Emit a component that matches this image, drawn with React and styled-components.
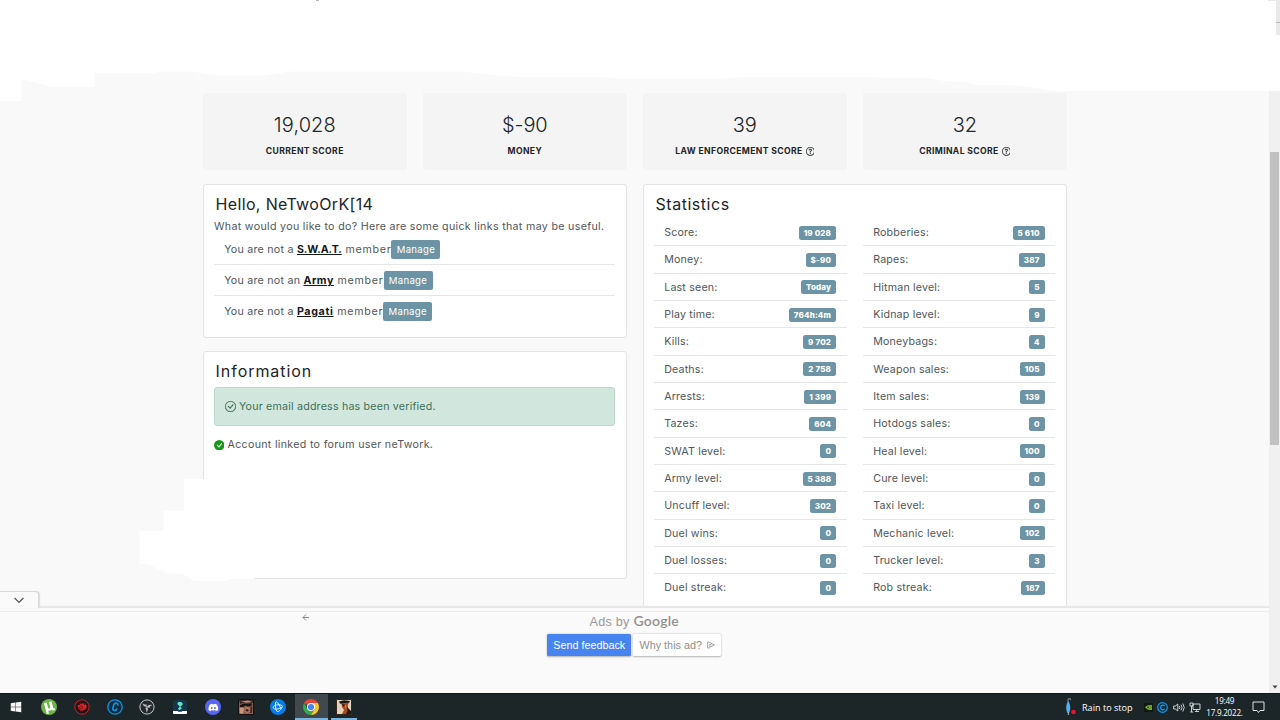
import React from 'react';
import styled, { createGlobalStyle } from 'styled-components';
import { BsQuestionCircle, BsCheckCircle, BsCheckCircleFill } from 'react-icons/bs';
import { FaDiscord, FaWindows } from 'react-icons/fa';

const Global = createGlobalStyle`
  * { box-sizing: border-box; }
  body { margin: 0; background: #f9f9f9; overflow: hidden; }
  h2, p { margin: 0; }
`;

const Screen = styled.div`
  position: relative;
  width: 1280px;
  height: 720px;
  display: flex;
  flex-direction: column;
  overflow: hidden;
  background: #f9f9f9;
  color: #212529;
  font-family: Inter, "Open Sans", sans-serif;
  font-size: 10.67px;
`;

const Browser = styled.div`
  display: flex;
  height: 693px;
`;

const Viewport = styled.div`
  display: flex;
  flex-direction: column;
  width: 1268.5px;
`;

const Page = styled.main`
  height: 607px;
  padding: 93.4px 0 0 202.8px;
  overflow: hidden;
`;

const ScoreRow = styled.section`
  display: grid;
  grid-template-columns: repeat(4, 204px);
  column-gap: 16px;
`;

const ScoreCard = styled.div`
  height: 77px;
  border-radius: 3px;
  background: #f4f4f4;
  display: flex;
  flex-direction: column;
  align-items: center;
  padding-top: 19px;
`;

const ScoreValue = styled.div`
  font-size: 20px;
  line-height: 26px;
  font-weight: 300;
  letter-spacing: ${(p) => p.$track || 0}px;
`;

const ScoreLabel = styled.div`
  display: flex;
  align-items: center;
  gap: 3px;
  margin-top: 6.8px;
  font-size: 8.6px;
  line-height: 12px;
  font-weight: 650;
  letter-spacing: 0.38px;
`;

const Columns = styled.div`
  display: grid;
  grid-template-columns: 424px 424px;
  column-gap: 16px;
  margin-top: 13.6px;
`;

const Stack = styled.div`
  display: flex;
  flex-direction: column;
  gap: 13px;
`;

const Panel = styled.section`
  height: ${(p) => p.$height}px;
  padding: 8px 10.4px 0 10.2px;
  border: 1px solid #e3e3e3;
  border-radius: 3px;
  background: #fff;
  color: #50565b;
`;

const Title = styled.h2`
  padding-left: 1.6px;
  font-size: 16px;
  line-height: 22px;
  font-weight: 400;
  color: #212529;
  letter-spacing: ${(p) => p.$track || 0}px;
`;

const Intro = styled.p`
  margin-top: 4.5px;
  line-height: 16px;
  letter-spacing: 0.32px;
  white-space: nowrap;
`;

const Memberships = styled.div`
  margin-top: -0.7px;
`;

const Membership = styled.div`
  display: flex;
  align-items: center;
  height: 30.7px;
  padding-left: 10.2px;
  border-bottom: ${(p) => (p.$last ? 0 : 1)}px solid #e6e6e6;
  letter-spacing: 0.25px;
  white-space: pre;
`;

const GroupLink = styled.a`
  color: #14181b;
  font-weight: 700;
  text-decoration: underline;
  letter-spacing: ${(p) => p.$track}px;
`;

const Suffix = styled.span`
  letter-spacing: 0.72px;
`;

const Manage = styled.button`
  width: 49px;
  height: 19px;
  padding: 0;
  border: 0;
  border-radius: 2px;
  background: #6c94a4;
  color: #fff;
  font: 9.6px Inter, sans-serif;
  letter-spacing: 0.3px;
`;

const Alert = styled.div`
  display: flex;
  align-items: center;
  gap: 3px;
  height: 39px;
  margin-top: 5px;
  padding-left: 10px;
  border: 1px solid #badbcc;
  border-radius: 3px;
  background: #d1e7dd;
  color: #41705a;
  letter-spacing: 0.2px;
`;

const Linked = styled.div`
  display: flex;
  align-items: center;
  gap: 3px;
  height: 16px;
  margin-top: 10.8px;
  letter-spacing: 0.31px;
  svg { color: #159a15; }
`;

const StatGrid = styled.div`
  display: grid;
  grid-template-columns: 193px 192.5px;
  column-gap: 16px;
  margin-top: 4px;
`;

const Stat = styled.div`
  display: flex;
  align-items: center;
  justify-content: space-between;
  height: 27.34px;
  padding: ${(p) => (p.$last ? 0 : 1)}px 10.9px 0 10.2px;
  border-bottom: ${(p) => (p.$last ? 0 : 1)}px solid #e6e6e6;
  letter-spacing: 0.18px;
`;

const Badge = styled.span`
  height: 14px;
  padding: 0 5px;
  border-radius: 2.5px;
  background: #6c94a4;
  color: #fff;
  font-size: 8px;
  font-weight: 800;
  line-height: 14px;
  letter-spacing: 0.15px;
`;

const AdBar = styled.aside`
  position: relative;
  height: 86px;
  display: flex;
  flex-direction: column;
  align-items: center;
  padding-top: 3px;
  border-top: 1px solid #e6e6e6;
  background: #fafafa;
  font-family: "Liberation Sans", sans-serif;
  box-shadow: 0 -1px 1px #e8e8e8;
`;

const AdSurface = styled.div`
  width: 100%;
  height: 82px;
  display: flex;
  flex-direction: column;
  align-items: center;
  border-top: 1px solid #ededed;
`;

const AdTab = styled.button`
  position: absolute;
  left: -2px;
  top: -17px;
  width: 41px;
  height: 17px;
  padding: 1px 0 0 1px;
  border: 1px solid #d9d9d9;
  border-bottom: 0;
  border-radius: 0 4px 0 0;
  background: #fafafa;
  box-shadow: 1px 0 1px #ddd;
  display: flex;
  align-items: center;
  justify-content: center;
`;

const BackArrow = styled.svg`
  position: absolute;
  left: 302px;
  top: 5px;
`;

const AdsBy = styled.div`
  display: flex;
  align-items: baseline;
  gap: 4px;
  height: 21.5px;
  line-height: 18px;
  font-size: 12.7px;
  color: #999;
  letter-spacing: 0.2px;
`;

const Brand = styled.span`
  font: 600 14px/18px Lato, sans-serif;
  color: #929292;
  letter-spacing: 0.2px;
`;

const AdButtons = styled.div`
  display: flex;
  gap: 2px;
`;

const AdButton = styled.button`
  display: flex;
  align-items: center;
  justify-content: center;
  gap: 5px;
  width: ${(p) => p.$width}px;
  height: 22px;
  padding: 0;
  border: 0;
  border-radius: 1.5px;
  font: 10.8px "Liberation Sans", sans-serif;
  background: ${(p) => (p.$primary ? '#4884f0' : '#fff')};
  color: ${(p) => (p.$primary ? '#fff' : '#8f8f8f')};
  box-shadow: 0 0.5px 2px rgba(0, 0, 0, 0.3);
`;

const ScrollTrack = styled.div`
  width: 11.5px;
  height: 693px;
  padding: 152px 1px 3px 1.5px;
  display: flex;
  flex-direction: column;
  justify-content: space-between;
  align-items: center;
  background: #f0f0f0;
`;

const ScrollThumb = styled.div`
  width: 9px;
  height: 293px;
  background: #c1c1c1;
`;

const Paint = styled.svg`
  position: absolute;
  left: 0;
  top: 0;
  pointer-events: none;
`;

const Taskbar = styled.footer`
  display: flex;
  justify-content: space-between;
  height: 27px;
  border-top: 1px solid #11181a;
  background: #1c2528;
  color: #fff;
  font-family: "Open Sans", "Noto Sans", sans-serif;
`;

const Apps = styled.nav`
  display: flex;
`;

const AppSlot = styled.div`
  width: 32.75px;
  height: 26px;
  display: flex;
  align-items: center;
  justify-content: center;
  background: ${(p) => (p.$active ? '#41494c' : 'transparent')};
`;

const OpenApp = styled(AppSlot)`
  border-bottom: 2px solid #78b4dd;
  padding-top: 2px;
  width: ${(p) => (p.$active ? 32.75 : 26)}px;
  margin-left: ${(p) => (p.$active ? 0 : 3.4)}px;
`;

const Tray = styled.div`
  display: flex;
  align-items: center;
  padding-right: 15.5px;
`;

const Weather = styled.span`
  width: 50px;
  margin: 1px 11.5px 0 5px;
  font-size: 9.1px;
  white-space: nowrap;
`;

const TrayIcons = styled.div`
  display: flex;
  align-items: center;
  gap: 4.5px;
`;

const Clock = styled.div`
  width: 38px;
  margin: 0 8px 0 4.5px;
  display: flex;
  flex-direction: column;
  align-items: center;
  font-size: 8.1px;
  line-height: 12px;
  letter-spacing: -0.25px;
`;

const scores = [
  ['19,028', 'CURRENT SCORE', false],
  ['$-90', 'MONEY', false],
  ['39', 'LAW ENFORCEMENT SCORE', true],
  ['32', 'CRIMINAL SCORE', true],
];

const groups = [
  ['You are not a ', 'S.W.A.T.', -0.1],
  ['You are not an ', 'Army', 0.5],
  ['You are not a ', 'Pagati', 0.65],
];

const leftStats = [
  ['Score:', '19 028'], ['Money:', '$-90'], ['Last seen:', 'Today'], ['Play time:', '764h:4m'],
  ['Kills:', '9 702'], ['Deaths:', '2 758'], ['Arrests:', '1 399'], ['Tazes:', '604'],
  ['SWAT level:', '0'], ['Army level:', '5 388'], ['Uncuff level:', '302'],
  ['Duel wins:', '0'], ['Duel losses:', '0'], ['Duel streak:', '0'],
];

const rightStats = [
  ['Robberies:', '5 610'], ['Rapes:', '387'], ['Hitman level:', '5'], ['Kidnap level:', '9'],
  ['Moneybags:', '4'], ['Weapon sales:', '105'], ['Item sales:', '139'], ['Hotdogs sales:', '0'],
  ['Heal level:', '100'], ['Cure level:', '0'], ['Taxi level:', '0'],
  ['Mechanic level:', '102'], ['Trucker level:', '3'], ['Rob streak:', '187'],
];

function StatList({ items }) {
  return (
    <div>
      {items.map(([name, value], i) => (
        <Stat key={name} $last={i === items.length - 1}>
          {name}
          <Badge>{value}</Badge>
        </Stat>
      ))}
    </div>
  );
}

function Icon({ size = 16, children }) {
  return <svg width={size} height={size} viewBox="0 0 16 16" fill="none">{children}</svg>;
}

const Torrent = () => (
  <Icon>
    <circle cx="8" cy="8" r="8" fill="#6cb544" />
    <path d="M3 4.2 5.7 3.4 7 8.4c.5 1.7 2.6 1.2 2.2-.5L8 2.9l2.5-.6 1.6 6.2c.3 1 .9 1.1 1.9.8l-.2 1.7c-1.8.9-3 .5-3.5-.5-.9 1.3-2 1.5-3.2 1.1l.9 2.8-2.3.5z" fill="#fff" />
  </Icon>
);

const RedGear = () => (
  <Icon>
    <circle cx="8" cy="8" r="7.2" fill="#1d1517" stroke="#cf2328" />
    <path d="m4 6 2-.3.4-1.5 1.5.7 1.2-1.2.8 1.5 1.7-1 .1 1.8 1.5-.1-1 1.6.8 1.2-1.6.5v1.5l-1.7-.3-.7 1.6-1.3-1-1.5.9-.3-1.6-1.9-.1.8-1.6L3.5 8z" fill="#e51d24" />
    <circle cx="7.2" cy="8.5" r="1.5" stroke="#35151a" strokeWidth=".6" />
    <path d="m10 5 1 1m0-1-1 1" stroke="#35151a" strokeWidth=".5" />
  </Icon>
);

const Ccleaner = () => (
  <Icon>
    <circle cx="8" cy="8" r="7.2" fill="#152d3b" stroke="#0b98e5" strokeWidth="1.3" />
    <path d="M10.8 6.5c.3-1.7-.6-2.3-1.8-2.3-1.4 0-2.1.8-2.5 2.2L6 8.9c-.3 1.7.2 2.6 1.4 2.6 1.3 0 2.1-.7 2.5-2.1" stroke="#0b98e5" strokeWidth="1.7" />
  </Icon>
);

const Obs = () => (
  <Icon>
    <circle cx="8" cy="8" r="7.1" fill="#25282b" stroke="#c8cbcd" />
    <path d="M3.6 4.2C4 7 5.8 8.3 8.6 7.6 7.7 7 7.4 6.2 7.6 5.2 6.2 5.9 4.8 5.6 3.6 4.2zM13.2 6.2c-2.6-1-4.7-.1-5.4 2.5 1-.5 2-.4 2.7.3.2-1.5 1-2.4 2.7-2.8zM7 13.6c2.3-1.8 2.6-4.1.6-6.1 0 1.1-.6 1.8-1.5 2.1 1.3 1 1.6 2.3.9 4z" fill="#babfc2" />
  </Icon>
);

const Filmora = () => (
  <Icon>
    <rect x="1" y="1" width="14" height="13" rx="3" fill="#16354a" />
    <path d="m6.2 3 3-.1L11 5 8.5 7.7 10 9.2l-2.7 2L6 9.8l1.8-2.3L5.3 5z" fill="#64e4c2" />
    <path d="M1 12h4.5l.8.8h3.4l.8-.8H15v1.7c0 .8-.5 1.3-1.3 1.3H2.3C1.5 15 1 14.5 1 13.7z" fill="#fff" />
  </Icon>
);

const Discord = () => (
  <svg width="16" height="16" viewBox="0 0 16 16">
    <circle cx="8" cy="8" r="8" fill="#5865f2" />
    <FaDiscord x="3" y="3.2" width="10" height="10" color="#fff" />
  </svg>
);

const Rapper = () => (
  <Icon>
    <path d="M.5.5h15v15H.5z" fill="#8a6253" stroke="#16100f" />
    <path d="M1 1h14v3L9 3 2 5z" fill="#3a2a27" />
    <path d="m3 2.4 7-.8 4 1.2-6 .7z" fill="#c48e73" />
    <path d="m2 6 4-1.4 8-.4-.7 3-4 .2-1.5-1L5 8.3 2 8z" fill="#1a1314" />
    <path d="m1.5 9 3-.5 1.5 1-1 5H2z" fill="#c99679" />
    <path d="m7 8.8 2-.8 3 1 .2 3-2.7 2-3-1.4z" fill="#b57660" />
    <path d="M7.4 10.7 9 10l2 .9-1 1.6-2-.2z" fill="#42191a" />
    <path d="m12.5 8 1.7-.5-.2 6-1.8.8z" fill="#3b2521" />
  </Icon>
);

const BattleNet = () => (
  <Icon>
    <circle cx="8" cy="8" r="8" fill="#087ce6" />
    <path d="M6.3 2.8C5 3.4 5 8.5 6.7 12.2c1.4 1.1 4-1 5.4-3.7M3.2 8.6c.4 2.3 6.1 2 9.1-.7.8-1.6-2.8-2.6-6-1.9-1.7.3-3.1 1.2-3.1 2.6zM6.3 2.8c1.8.6 3.6 4 4.3 6.6" stroke="#e3f3ff" />
  </Icon>
);

const Chrome = () => (
  <Icon>
    <path d="M8 8 1.1 4A8 8 0 0 1 14.9 4z" fill="#e9443b" />
    <path d="m4.5 10 3.5 2 2-.1L8 16A8 8 0 0 1 1.1 4z" fill="#35a852" />
    <path d="M8 4h6.9A8 8 0 0 1 8 16l3.5-6z" fill="#fdc72b" />
    <circle cx="8" cy="8" r="4" fill="#fff" />
    <circle cx="8" cy="8" r="3.1" fill="#4285f4" />
  </Icon>
);

const SanAndreas = () => (
  <Icon>
    <path d="M.5.5h15v15H.5z" fill="#e4d2bd" stroke="#34251d" />
    <path d="m5 3 4-1 4 1-1 3v3l2 6H6l2-4-2-3z" fill="#a84b1d" />
    <path d="m3 2.6 5-1.4 6 .8-1 1.7-5 .2-4 .8zM6 5.3l3 .3-1.4 2.2z" fill="#171513" />
    <path d="m11 8 4 4v3h-5l1.5-3z" fill="#211713" />
    <path d="m9 5.5 1.3 1.8-1 3z" fill="#f08a33" />
  </Icon>
);

const Umbrella = () => (
  <svg width="13" height="18" viewBox="0 0 13 18" fill="none">
    <path d="M4 4V1.7C4 .2 6.7.3 6.7 2" stroke="#78838a" strokeWidth="1.2" />
    <path d="M4.2 3c2.3 3.4 2.8 8 .8 12H3.5C1.4 11 2 6.4 4.2 3z" fill="#54aef0" />
    <path d="M4.3 14v3" stroke="#a7bcc9" />
    <circle cx="9.5" cy="14" r="2.3" fill="#df1535" />
  </svg>
);

const Nvidia = () => (
  <svg width="9" height="9" viewBox="0 0 9 9" fill="none">
    <path d="M0 0h9v9H0z" fill="#101711" />
    <path d="M3.5 2H8v5H3.5z" fill="#72ad22" />
    <path d="M1 4.5C3 2 5 2 7 4.3 5 6.8 3 7 1 4.5z" fill="#82b83d" stroke="#163111" strokeWidth=".4" />
    <circle cx="4" cy="4.4" r=".8" fill="#1b3412" />
  </svg>
);

const CopyrightRing = () => (
  <Icon size={11}>
    <circle cx="8" cy="8" r="7" fill="#102c3d" stroke="#1496e7" strokeWidth="1.8" />
    <path d="M11 6C9.8 3.8 5.2 4 5.2 8s4.6 4.2 5.8 2" stroke="#1496e7" strokeWidth="2" />
  </Icon>
);

const Speaker = () => (
  <svg width="12" height="11" viewBox="0 0 12 11" fill="none" stroke="#dfe3e4" strokeWidth=".9">
    <path d="M.7 4v3h1.7l2.4 2V2L2.4 4zM6.3 4q1 1.5 0 3M8 2.7q2.1 2.8 0 5.6M9.8 1.5q2.9 4 0 8" />
  </svg>
);

const Network = () => (
  <svg width="12" height="11" viewBox="0 0 12 11" fill="none" stroke="#dfe3e4" strokeWidth=".9">
    <path d="M4 2h7v5.5H4zM6 9.5h4M7.7 7.5v2M1 1h3v3H1zM2.5 4v6M1.2 10h3" />
  </svg>
);

const Notification = () => (
  <svg width="13" height="13" viewBox="0 0 13 13" fill="none" stroke="#dfe3e4">
    <path d="M1 1h11v8.5H8L6.5 11.5 5 9.5H1z" />
  </svg>
);

const apps = [
  () => <FaWindows size={12} color="#f6f6f6" />, Torrent, RedGear, Ccleaner, Obs, Filmora,
  Discord, Rapper, BattleNet,
];

export default function App() {
  return (
    <Screen>
      <Global />
      <Browser>
        <Viewport>
          <Page>
            <ScoreRow>
              {scores.map(([value, label, help]) => (
                <ScoreCard key={label}>
                  <ScoreValue $track={value === '19,028' ? 0.1 : -0.15}>{value}</ScoreValue>
                  <ScoreLabel>{label}{help && <BsQuestionCircle size={8.7} strokeWidth={0.5} />}</ScoreLabel>
                </ScoreCard>
              ))}
            </ScoreRow>
            <Columns>
              <Stack>
                <Panel $height={154}>
                  <Title $track={0.34}>Hello, NeTwoOrK[14</Title>
                  <Intro>What would you like to do? Here are some quick links that may be useful.</Intro>
                  <Memberships>
                    {groups.map(([text, group, track], i) => (
                      <Membership key={group} $last={i === 2}>
                        <span>{text}<GroupLink $track={track}>{group}</GroupLink><Suffix>{' member'}</Suffix></span>
                        <Manage>Manage</Manage>
                      </Membership>
                    ))}
                  </Memberships>
                </Panel>
                <Panel $height={228}>
                  <Title $track={0.95}>Information</Title>
                  <Alert><BsCheckCircle size={11} strokeWidth={0.3} />Your email address has been verified.</Alert>
                  <Linked><BsCheckCircleFill size={10.5} />Account linked to forum user neTwork.</Linked>
                </Panel>
              </Stack>
              <Panel $height={440}>
                <Title $track={0.52}>Statistics</Title>
                <StatGrid>
                  <StatList items={leftStats} />
                  <StatList items={rightStats} />
                </StatGrid>
              </Panel>
            </Columns>
          </Page>
          <AdBar>
            <AdTab>
              <svg width="10" height="7" viewBox="0 0 10 7" fill="none"><path d="m.6 1 4.4 4.4L9.4 1" stroke="#555" strokeWidth="1.3" /></svg>
            </AdTab>
            <BackArrow width="8" height="9" viewBox="0 0 8 9" fill="none"><path d="M7 4.5H1M4 1.5l-3 3 3 3" stroke="#888" /></BackArrow>
            <AdSurface>
              <AdsBy>Ads by <Brand>Google</Brand></AdsBy>
              <AdButtons>
                <AdButton $primary $width={84}>Send feedback</AdButton>
                <AdButton $width={88}>
                  Why this ad?
                  <svg width="8" height="8" viewBox="0 0 8 8" fill="none" stroke="#8d8d8d" strokeWidth=".8"><path d="M2.5 7H.7V1h1L7.3 4 2.8 6.4V3.2L4.5 4" /></svg>
                </AdButton>
              </AdButtons>
            </AdSurface>
          </AdBar>
        </Viewport>
        <ScrollTrack>
          <ScrollThumb />
          <svg width="6" height="6" viewBox="0 0 6 6"><path d="M.5 1.5h5L3 4.5z" fill="#444" /></svg>
        </ScrollTrack>
      </Browser>
      <Taskbar>
        <Apps>
          {apps.map((Glyph, i) => (
            <AppSlot key={i}><Glyph /></AppSlot>
          ))}
          <OpenApp $active><Chrome /></OpenApp>
          <OpenApp><SanAndreas /></OpenApp>
        </Apps>
        <Tray>
          <Umbrella />
          <Weather>Rain to stop</Weather>
          <TrayIcons><Nvidia /><CopyrightRing /><Speaker /><Network /></TrayIcons>
          <Clock><span>19:49</span><span>17.9.2022.</span></Clock>
          <Notification />
        </Tray>
      </Taskbar>
      <Paint width="1280" height="720" viewBox="0 0 1280 720">
        <path fill="#fff" d="M0 0H1280V91H1055L1035 88 1012 85H975L965 82 945 81 925 78H885L875 77H745L715 79H625L600 77H525L495 75.5 465 71.5H290L265 75.5H216L192 71.5H160L152 73H95V87H52L21.5 79V101H0z" />
        <path fill="#fff" d="M184 479H300V570H254.5V579H230L228 581H194L187 576 180 573.5H168L147 564H139.5V531H163.5V511H184z" />
        <path fill="#e9e9e9" d="M1276 0h4v35h-4zM1268 0h8v1h-8z" />
        <path fill="#b9b9b9" d="M1276 22h4v1h-4zM316 0h3v1h-3z" />
      </Paint>
    </Screen>
  );
}
